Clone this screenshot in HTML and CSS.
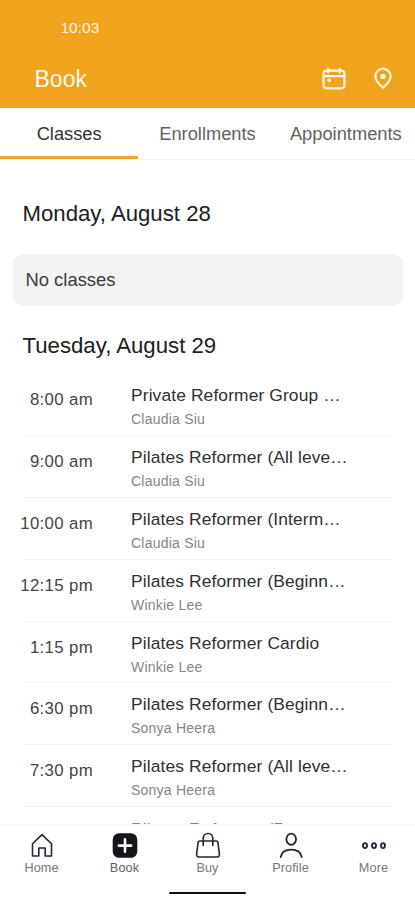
FILE: index.html
```html
<!DOCTYPE html>
<html lang="en">
<head>
<meta charset="utf-8">
<title>Book</title>
<link rel="stylesheet" href="styles.css">
</head>
<body>
<div class="app">
  <header class="header">
    <div class="clock">10:03</div>
    <div class="bar">
      <h1 class="title">Book</h1>
      <svg class="calendar" width="24" height="24" viewBox="0 0 24 24" fill="none" stroke="currentColor" stroke-width="2.2" stroke-linecap="round"><rect x="1.600" y="3.700" width="20.800" height="17.600" rx="3"/><path d="M1.600 9.100h20.800M6.200 1.900v3.800M17.800 1.900v3.800"/><circle cx="7.200" cy="13.300" r="1.300" fill="currentColor" stroke-width="1.200"/></svg>
      <svg class="pin" width="20" height="24" viewBox="0 0 20 24" fill="none" stroke="currentColor" stroke-width="2.200" stroke-linejoin="round"><path d="M10 20.800C6.200 17.300 2.300 13.500 2.300 9.400a7.700 7.700 0 0 1 15.400 0c0 4.100-3.900 7.900-7.700 11.400z"/><circle cx="10" cy="9.400" r="2.600" fill="currentColor" stroke="none"/></svg>
    </div>
  </header>
  <nav class="tabs">
    <a class="tab active">Classes</a>
    <a class="tab">Enrollments</a>
    <a class="tab">Appointments</a>
  </nav>
  <main class="schedule">
    <h2 class="day">Monday, August 28</h2>
    <div class="empty">No classes</div>
    <h2 class="day second">Tuesday, August 29</h2>
    <ul class="list">
      <li class="row"><time class="time">8:00 am</time><div class="info"><div class="name">Private Reformer Group …</div><div class="teacher">Claudia Siu</div></div></li>
      <li class="row"><time class="time">9:00 am</time><div class="info"><div class="name">Pilates Reformer (All leve…</div><div class="teacher">Claudia Siu</div></div></li>
      <li class="row"><time class="time">10:00 am</time><div class="info"><div class="name">Pilates Reformer (Interm…</div><div class="teacher">Claudia Siu</div></div></li>
      <li class="row"><time class="time">12:15 pm</time><div class="info"><div class="name">Pilates Reformer (Beginn…</div><div class="teacher">Winkie Lee</div></div></li>
      <li class="row"><time class="time">1:15 pm</time><div class="info"><div class="name">Pilates Reformer Cardio</div><div class="teacher">Winkie Lee</div></div></li>
      <li class="row"><time class="time">6:30 pm</time><div class="info"><div class="name">Pilates Reformer (Beginn…</div><div class="teacher">Sonya Heera</div></div></li>
      <li class="row"><time class="time">7:30 pm</time><div class="info"><div class="name">Pilates Reformer (All leve…</div><div class="teacher">Sonya Heera</div></div></li>
      <li class="row partial"><time class="time"></time><div class="info"><div class="name">Pilates Reformer (Post…</div></div></li>
    </ul>
  </main>
  <footer class="footer">
    <nav class="nav">
      <a class="item"><svg width="28" height="28" viewBox="0 0 28 28" fill="none" stroke="currentColor" stroke-width="1.600" stroke-linejoin="round"><path d="M4.500 12.800 14 3.600l9.500 9.200v12.200h-6.300v-8h-6.400v8H4.500z"/></svg><span>Home</span></a>
      <a class="item active"><svg width="28" height="28" viewBox="0 0 28 28"><rect x="1.700" y="2.200" width="24.600" height="24.600" rx="6.500" fill="#15151b"/><path d="M14 8.400v12.400M7.800 14.600h12.400" stroke="#fff" stroke-width="2.600" stroke-linecap="round"/></svg><span>Book</span></a>
      <a class="item"><svg width="28" height="28" viewBox="0 0 28 28" fill="none" stroke="currentColor" stroke-width="1.600" stroke-linecap="round" stroke-linejoin="round"><path d="M5.800 10h16.400c1.100 0 1.500.6 1.700 1.500l1.500 11.400c.2 1.900-.5 3.100-2.100 3.100H4.700c-1.600 0-2.300-1.200-2.100-3.100l1.500-11.400c.2-.9.600-1.500 1.700-1.500z"/><path d="M9.200 14.500V7.400c0-2.800 2-4.900 4.800-4.900s4.800 2.100 4.800 4.900v7.100"/></svg><span>Buy</span></a>
      <a class="item"><svg width="28" height="28" viewBox="0 0 28 28" fill="none" stroke="currentColor" stroke-width="1.800" stroke-linecap="round"><ellipse cx="14.200" cy="8.200" rx="4.800" ry="5.600"/><path d="M3.700 26c.8-4.900 4.300-7.400 10.500-7.400s9.700 2.500 10.500 7.400"/></svg><span>Profile</span></a>
      <a class="item"><svg width="28" height="28" viewBox="0 0 28 28" fill="none" stroke="currentColor" stroke-width="1.900"><ellipse cx="5" cy="14.600" rx="2" ry="2.500"/><ellipse cx="14" cy="14.600" rx="2" ry="2.500"/><ellipse cx="23" cy="14.600" rx="2" ry="2.500"/></svg><span>More</span></a>
    </nav>
    <div class="home-bar"></div>
  </footer>
</div>
</body>
</html>
```

FILE: styles.css
```css
* { box-sizing: border-box; }
body { margin: 0; background: #fff; font-family: "Liberation Sans", Arial, sans-serif; color: #222; }
h1, h2, ul { margin: 0; padding: 0; font-weight: 400; list-style: none; }
svg { display: block; }
.app { display: flex; flex-direction: column; width: 415px; height: 900px; overflow: hidden; }
.header { flex: none; height: 108px; padding-top: 18px; background: #f0a41d; color: #fff6e6; }
.clock { padding-left: 60.500px; font-size: 15.500px; line-height: 20px; }
.bar { display: flex; align-items: center; height: 40px; margin-top: 21px; padding: 0 22px 0 34.500px; }
.title { flex: 1; font-size: 23px; line-height: 28px; color: #fffaf0; }
.calendar { margin-right: 27px; }
.tabs { flex: none; display: grid; grid-template-columns: repeat(3, 1fr); height: 52px; border-bottom: 1px solid #f3f3f3; }
.tab { display: flex; justify-content: center; height: 52px; padding-top: 15px; font-size: 18.300px; line-height: 22px; color: #626262; }
.tab.active { color: #333; border-bottom: 3px solid #efa32a; height: 51px; }
.schedule { flex: 1; min-height: 0; overflow: hidden; padding-top: 41px; }
.day { padding-left: 22.500px; font-size: 22.200px; line-height: 26px; color: #202020; }
.empty { height: 52px; margin: 27px 12px 0 13px; padding: 15px 12.500px; border-radius: 10px; background: #f2f2f2; font-size: 18.400px; line-height: 22px; color: #3a3a3a; }
.day.second { margin-top: 27px; }
.list { margin: 15px 23px 0 24px; }
.row { display: grid; grid-template-columns: 69px 1fr; column-gap: 38px; height: 61.900px; padding-top: 11px; border-bottom: 1px solid #f3f3f3; }
.time { justify-self: end; margin-top: 5px; white-space: nowrap; font-size: 16.800px; letter-spacing: .35px; line-height: 20px; color: #444; }
.name { font-size: 17.400px; letter-spacing: .12px; line-height: 20px; color: #303030; white-space: nowrap; }
.partial .name { margin-top: 1px; color: #858585; }
.teacher { margin-top: 6px; font-size: 14px; letter-spacing: .22px; line-height: 16px; color: #858585; }
.footer { flex: none; height: 76px; border-top: 2px solid #f6f6f6; background: #fff; }
.nav { display: grid; grid-template-columns: repeat(5, 1fr); padding-top: 5px; }
.item { display: flex; flex-direction: column; align-items: center; color: #25253a; }
.item span { margin-top: 2px; font-size: 12.700px; letter-spacing: .1px; line-height: 14px; color: #777; }
.item.active span { color: #606060; }
.home-bar { width: 77px; height: 2px; margin: 17px auto 0; border-radius: 1px; background: #101014; }
```
